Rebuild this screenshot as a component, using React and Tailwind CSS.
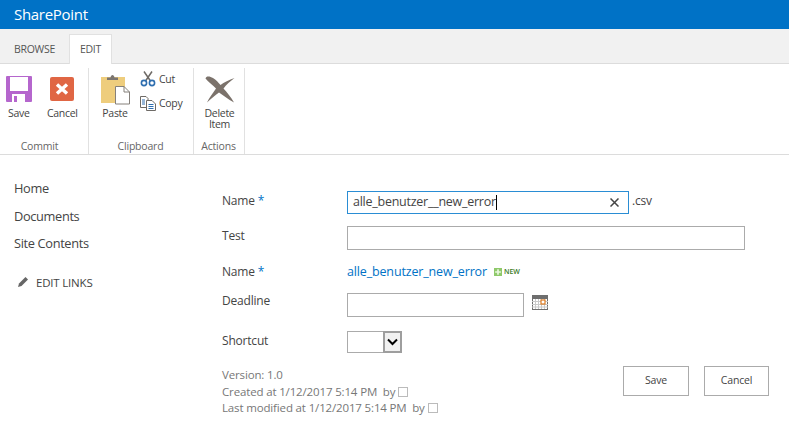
const F = '"Open Sans","Noto Sans",sans-serif';

function RibbonBtn({ icon, label, w }) {
  return (
    <div className={`flex flex-col items-center ${w}`}>
      <div className="h-[32px] flex items-center justify-center">{icon}</div>
      <div className="mt-[3px] text-[10.5px] leading-[11px] text-[#444] text-center tracking-[-0.3px]">{label}</div>
    </div>
  );
}

const SaveIcon = () => (
  <svg width="26" height="26" viewBox="0 0 26 26">
    <path d="M1 0H25a1 1 0 0 1 1 1V25a1 1 0 0 1-1 1H1a1 1 0 0 1-1-1V1a1 1 0 0 1 1-1z" fill="#b566cd" />
    <rect x="4" y="1" width="18" height="14" fill="#fff" />
    <rect x="6" y="18" width="13" height="8" fill="#fff" />
    <rect x="8" y="20" width="3" height="6" fill="#b566cd" />
  </svg>
);
const CancelIcon = () => (
  <svg width="24" height="24" viewBox="0 0 24 24">
    <rect width="24" height="24" rx="2" fill="#e06644" />
    <path d="M7 7.5L17 16.5M17 7.5L7 16.5" stroke="#fff" strokeWidth="3.4" />
  </svg>
);
const PasteIcon = () => (
  <svg width="29" height="31" viewBox="0 0 29 31">
    <rect x="0" y="3" width="24" height="26" fill="#eecd7d" />
    <path d="M6 6V3.5H9.5C10 0 13 0 13.5 3.5H17V6z" fill="#7b7570" />
    <path d="M14.5 12.5H23L28.5 18V30H14.5z" fill="#fff" stroke="#85807b" />
    <path d="M23 12.5V18H28.5" fill="none" stroke="#85807b" />
  </svg>
);
const CutIcon = () => (
  <svg width="16" height="16" viewBox="0 0 16 16">
    <path d="M4 0.5L10.5 10M12 0.5L5.5 10" stroke="#6e6a66" strokeWidth="1.5" fill="none" />
    <circle cx="4" cy="12" r="2.6" fill="none" stroke="#2f6fb0" strokeWidth="1.6" />
    <circle cx="12" cy="12" r="2.6" fill="none" stroke="#2f6fb0" strokeWidth="1.6" />
  </svg>
);
const CopyIcon = () => (
  <svg width="16" height="15" viewBox="0 0 16 15">
    <path d="M0.5 0.5H6L8 2.5V11.5H0.5z" fill="#fff" stroke="#6e6a66" />
    <path d="M6.5 4.5H12L15.5 8V14.5H6.5z" fill="#fff" stroke="#6e6a66" />
    <path d="M2 4H5M2 6H5M2 8H5M8.5 8.5H13.5M8.5 10.5H13.5M8.5 12.5H13.5" stroke="#2f6fb0" />
  </svg>
);
const DeleteIcon = () => (
  <svg width="30" height="28" viewBox="0 0 30 28">
    <path d="M0.5 3.5C1 0.5 5 1 8 3C11 5 13.5 7.5 15.5 10C19 7.5 24 4.5 29.5 3C25.5 6 21 10 18.5 13.5C22 17.5 26 22 29 27.5C23 24 18 20.5 14 17.5C10 20 6 24 2 27.5C4 23 8 18 11 13.5C8 10 3 7 0.5 3.5z" fill="#7b726b" />
  </svg>
);
const CalIcon = () => (
  <svg width="16" height="15" viewBox="0 0 16 15">
    <rect x="0" y="0" width="16" height="15" fill="#fff" />
    <rect x="0" y="0" width="16" height="4" fill="#6e6e6e" />
    <path d="M0.5 0V15M15.5 0V15M0 14.5H16" stroke="#6e6e6e" />
    <path d="M3.5 4V14M6.5 4V14M9.5 4V14M12.5 4V14M0 6.5H16M0 9.5H16M0 12H16" stroke="#c9c9c9" />
    <rect x="9" y="5" width="4" height="4" fill="#fff" stroke="#dd7a1f" strokeWidth="1.2" />
  </svg>
);

const Label = ({ children, star, cls = "" }) => (
  <div className={`w-[125px] shrink-0 text-[12px] text-[#444] tracking-[-0.2px] ${cls}`}>
    {children}
    {star && <span className="text-[#0072c6]"> *</span>}
  </div>
);

const NavItem = ({ children }) => (
  <div className="text-[12.8px] leading-[18px] text-[#444] tracking-[-0.35px] h-[27.5px]">{children}</div>
);

export default function App() {
  return (
    <div className="w-[789px] h-[426px] bg-white overflow-hidden flex flex-col" style={{ fontFamily: F }}>
      <div className="h-[29px] bg-[#0072c6] flex items-center pl-[14px] text-white text-[15px] tracking-[-0.3px]">SharePoint</div>

      <div className="h-[35px] bg-[#f1f1f1] flex items-end border-b border-[#dcdcdc]">
        <div className="w-[69px] h-[26px] flex items-center justify-center text-[10.5px] text-[#555] tracking-[-0.3px]">BROWSE</div>
        <div className="w-[43px] h-[30px] -mb-px bg-white border border-b-0 border-[#e1e1e1] flex items-center justify-center text-[10.5px] text-[#555] tracking-[-0.3px] pt-[1px]">EDIT</div>
      </div>

      <div className="h-[91px] flex border-b border-[#dcdcdc] bg-white shrink-0">
        <div className="w-[89px] border-r border-[#e1e1e1] mt-[4px] flex flex-col">
          <div className="flex pt-[5px] pl-[1px] flex-1">
            <RibbonBtn w="w-[36px]" icon={<SaveIcon />} label="Save" />
            <RibbonBtn w="w-[52px]" icon={<CancelIcon />} label="Cancel" />
          </div>
          <div className="h-[16px] leading-[16px] pr-[9px] text-center text-[10.5px] text-[#666] tracking-[-0.2px]">Commit</div>
        </div>

        <div className="w-[105px] border-r border-[#e1e1e1] mt-[4px] flex flex-col">
          <div className="flex pt-[3px] flex-1">
            <div className="ml-[12px] mt-[3px] w-[29px]">
              <PasteIcon />
              <div className="mt-[3px] -ml-[1px] text-[10.5px] text-[#444] leading-[11px] text-center tracking-[-0.3px]">Paste</div>
            </div>
            <div className="ml-[10px] flex flex-col gap-[8px] text-[10.5px] leading-[16px] text-[#444] tracking-[-0.3px]">
              <div className="flex items-center gap-[3px]"><CutIcon /><span>Cut</span></div>
              <div className="flex items-center gap-[3px]"><CopyIcon /><span>Copy</span></div>
            </div>
          </div>
          <div className="h-[16px] leading-[16px] pr-[1px] text-center text-[10.5px] text-[#666] tracking-[-0.2px]">Clipboard</div>
        </div>

        <div className="w-[51px] border-r border-[#e1e1e1] mt-[4px] flex flex-col">
          <div className="flex justify-center pt-[7px] flex-1 pl-[1px]">
            <div className="flex flex-col items-center">
              <DeleteIcon />
              <div className="mt-[5px] text-[10.5px] leading-[11px] text-center text-[#444] tracking-[-0.3px]">Delete<br />Item</div>
            </div>
          </div>
          <div className="h-[16px] leading-[16px] pr-[1px] text-center text-[10.5px] text-[#666] tracking-[-0.2px]">Actions</div>
        </div>
      </div>

      <div className="flex flex-1">
        <div className="w-[222px] shrink-0 pl-[14px] pt-[24px]">
          <NavItem>Home</NavItem>
          <NavItem>Documents</NavItem>
          <NavItem>Site Contents</NavItem>
          <div className="mt-[12px] flex items-center text-[11.5px] text-[#444] tracking-[-0.2px]">
            <svg width="12" height="12" viewBox="0 0 12 12" className="ml-[3px] mr-[7px]">
              <path d="M1 11L2 7.5L8.5 1L11 3.5L4.5 10z" fill="#666" />
            </svg>
            EDIT LINKS
          </div>
        </div>

        <div className="flex-1 pt-[36px] pr-[20px] relative">
          <div className="flex items-start h-[35px]">
            <Label cls="pt-[1px]" star>Name</Label>
            <div className="w-[282px] h-[23px] border border-[#2a8dd4] flex items-center pl-[5px] pr-[9px] text-[12.5px] text-[#444] tracking-[-0.25px]">
              <span>alle_benutzer__new_error</span>
              <span className="w-px h-[15px] bg-black" />
              <svg width="9" height="9" viewBox="0 0 9 9" className="ml-auto">
                <path d="M0.5 0.5L8.5 8.5M8.5 0.5L0.5 8.5" stroke="#444" strokeWidth="1.5" />
              </svg>
            </div>
            <span className="ml-[3px] pt-[1px] text-[12px] text-[#444] tracking-[-0.2px]">.csv</span>
          </div>
          <div className="flex items-start h-[36px]">
            <Label cls="pt-[1px]">Test</Label>
            <div className="w-[398px] h-[24px] border border-[#ababab]" />
          </div>
          <div className="flex items-center h-[20px]">
            <Label star>Name</Label>
            <span className="text-[12.5px] text-[#0072c6] tracking-[-0.15px]">alle_benutzer_new_error</span>
            <svg width="8" height="8" viewBox="0 0 7 7" className="ml-[7px]">
              <rect width="7" height="7" fill="#8fc96b" />
              <path d="M3.5 1V6M1 3.5H6" stroke="#e9f6de" strokeWidth="1.5" />
            </svg>
            <span className="ml-[2px] text-[7px] font-semibold text-[#3a7a1c]">NEW</span>
          </div>
          <div className="flex items-start h-[41px] mt-[7px]">
            <Label cls="pt-[3px]">Deadline</Label>
            <div className="w-[177px] h-[24px] mt-[4px] border border-[#ababab]" />
            <span className="ml-[8px] mt-[6px]"><CalIcon /></span>
          </div>
          <div className="flex items-center h-[23px]">
            <Label cls="pb-[2px]">Shortcut</Label>
            <div className="w-[55px] h-[22px] border border-[#ababab] flex justify-end">
              <div className="w-[19px] -mt-px -mb-px -mr-px bg-[#f1f1f1] border-2 border-[#9e9e9e] flex items-center justify-center">
                <svg width="11" height="8" viewBox="0 0 11 8"><path d="M1 1.5L5.5 6L10 1.5" fill="none" stroke="#000" strokeWidth="2" /></svg>
              </div>
            </div>
          </div>
          <div className="flex justify-between mt-[13px]">
            <div className="text-[11.5px] leading-[16.5px] text-[#777] tracking-[-0.15px] pt-[1px]">
              <div>Version: 1.0</div>
              <div className="flex items-center">Created at 1/12/2017 5:14 PM&nbsp; by<span className="ml-[3px] w-[10px] h-[10px] border border-[#bbb]" /></div>
              <div className="flex items-center">Last modified at 1/12/2017 5:14 PM&nbsp; by<span className="ml-[3px] w-[10px] h-[10px] border border-[#bbb]" /></div>
            </div>
            <div className="flex gap-[15px]">
              <div className="w-[66px] h-[30px] border border-[#ababab] flex items-center justify-center text-[10.5px] text-[#444] tracking-[-0.2px]">Save</div>
              <div className="w-[65px] h-[30px] border border-[#ababab] flex items-center justify-center text-[10.5px] text-[#444] tracking-[-0.2px]">Cancel</div>
            </div>
          </div>
        </div>
      </div>
    </div>
  );
}
